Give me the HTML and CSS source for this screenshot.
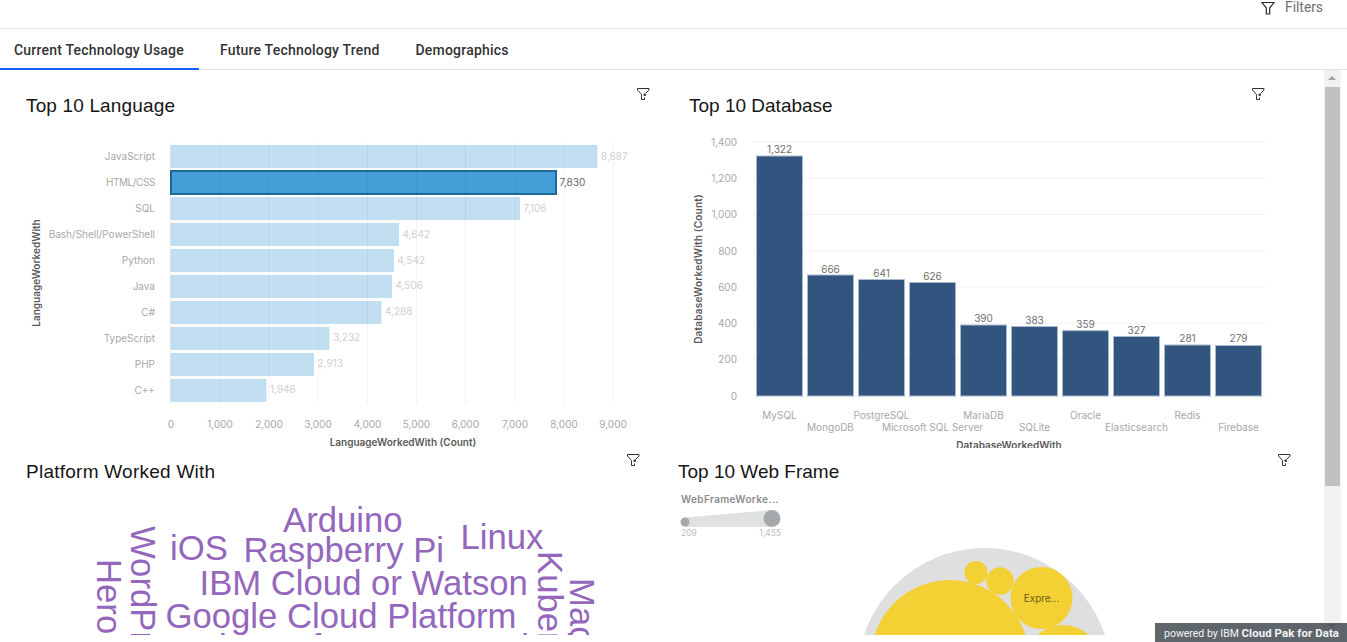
FILE: index.html
```html
<!DOCTYPE html>
<html>
<head>
    <title>Technology dashboard</title>
    <link rel="stylesheet" href="styles.css">
</head>
<body>

<div class="topbar">
    <svg class="funnel" width="14" height="14" viewBox="0 0 14 14"><path d="M1 1.5h12L8.7 7v6H5.3V7z"/></svg>
    <span class="filters">Filters</span>
</div>

<div class="tabs">
    <a class="tab active">Current Technology Usage</a>
    <a class="tab">Future Technology Trend</a>
    <a class="tab">Demographics</a>
</div>

<div class="main">
    <div class="grid">

        <div class="panel p1">
            <h2>Top 10 Language</h2>
            <svg class="tile-filter" width="14" height="14" viewBox="0 0 14 14"><path d="M1.5 1.5H13V3L9.5 6.5M1.5 1.5V3L5.5 7.5V12.5H8.5V10.5"/><circle cx="8.7" cy="7.7" r="1.3"/></svg>
            <svg class="chart" width="660" height="320" viewBox="0 130 660 320">
                <g class="bars-light">
                    <rect x="170.5" y="145" width="427" height="23"/>
                    <rect x="170.5" y="197" width="349.5" height="23"/>
                    <rect x="170.5" y="223" width="228.5" height="23"/>
                    <rect x="170.5" y="249" width="223.5" height="23"/>
                    <rect x="170.5" y="275" width="221.5" height="23"/>
                    <rect x="170.5" y="301" width="211" height="23"/>
                    <rect x="170.5" y="327" width="159" height="23"/>
                    <rect x="170.5" y="353" width="143.5" height="23"/>
                    <rect x="170.5" y="379" width="96" height="23"/>
                </g>
                <rect class="bar-selected" x="171" y="171" width="385" height="23"/>
                <g class="vgrid">
                    <path d="M170.5 143V404M220 143V404M269 143V404M318 143V404M367.5 143V404M416.5 143V404M465.5 143V404M515 143V404M564 143V404M613 143V404"/>
                </g>
                <g class="tick end">
                    <text x="155" y="160">JavaScript</text>
                    <text x="155" y="186" class="narrow">HTML/CSS</text>
                    <text x="155" y="212">SQL</text>
                    <text x="155" y="238">Bash/Shell/PowerShell</text>
                    <text x="155" y="264">Python</text>
                    <text x="155" y="290">Java</text>
                    <text x="155" y="316">C#</text>
                    <text x="155" y="342">TypeScript</text>
                    <text x="155" y="368">PHP</text>
                    <text x="155" y="394">C++</text>
                </g>
                <g class="value">
                    <text x="601" y="160">8,687</text>
                    <text class="value-on" x="559.5" y="186">7,830</text>
                    <text x="523.5" y="212">7,106</text>
                    <text x="402.5" y="238">4,642</text>
                    <text x="397.5" y="264">4,542</text>
                    <text x="395.5" y="289">4,506</text>
                    <text x="385" y="315">4,288</text>
                    <text x="333" y="341">3,232</text>
                    <text x="317.5" y="367">2,913</text>
                    <text x="270" y="393">1,946</text>
                </g>
                <g class="tick middle">
                    <text x="171" y="428">0</text>
                    <text x="220" y="428">1,000</text>
                    <text x="269" y="428">2,000</text>
                    <text x="318" y="428">3,000</text>
                    <text x="367.5" y="428">4,000</text>
                    <text x="416.5" y="428">5,000</text>
                    <text x="465.5" y="428">6,000</text>
                    <text x="515" y="428">7,000</text>
                    <text x="564" y="428">8,000</text>
                    <text x="613" y="428">9,000</text>
                </g>
                <text class="axis-title" x="403" y="446">LanguageWorkedWith (Count)</text>
                <text class="axis-title" transform="translate(40 273) rotate(-90)">LanguageWorkedWith</text>
            </svg>
        </div>

        <div class="panel p2">
            <h2>Top 10 Database</h2>
            <svg class="tile-filter" width="14" height="14" viewBox="0 0 14 14"><path d="M1.5 1.5H13V3L9.5 6.5M1.5 1.5V3L5.5 7.5V12.5H8.5V10.5"/><circle cx="8.7" cy="7.7" r="1.3"/></svg>
            <svg class="chart" width="660" height="318" viewBox="662 130 660 318">
                <g class="hgrid">
                    <path d="M752 141.7H1265M752 178.3H1265M752 214.5H1265M752 250.7H1265M752 287H1265M752 323.3H1265M752 359.6H1265M752 396H1265"/>
                </g>
                <g class="bars-dark">
                    <rect x="756.5" y="156" width="46" height="240"/>
                    <rect x="807.5" y="275" width="46" height="121"/>
                    <rect x="858.5" y="279.5" width="46" height="116.5"/>
                    <rect x="909.5" y="282.5" width="46" height="113.5"/>
                    <rect x="960.5" y="325" width="46" height="71"/>
                    <rect x="1011.5" y="326.5" width="46" height="69.5"/>
                    <rect x="1062.5" y="330.7" width="46" height="65.3"/>
                    <rect x="1113.5" y="336.5" width="46" height="59.5"/>
                    <rect x="1164.5" y="345" width="46" height="51"/>
                    <rect x="1215.5" y="345.5" width="46" height="50.5"/>
                </g>
                <g class="tick end">
                    <text x="737" y="145.5">1,400</text>
                    <text x="737" y="182">1,200</text>
                    <text x="737" y="218">1,000</text>
                    <text x="737" y="254.5">800</text>
                    <text x="737" y="291">600</text>
                    <text x="737" y="327">400</text>
                    <text x="737" y="363">200</text>
                    <text x="737" y="399.5">0</text>
                </g>
                <g class="value-top">
                    <text x="779.5" y="153">1,322</text>
                    <text x="830.5" y="273">666</text>
                    <text x="881.5" y="277">641</text>
                    <text x="932.5" y="280">626</text>
                    <text x="983.5" y="322">390</text>
                    <text x="1034.5" y="324">383</text>
                    <text x="1085.5" y="328">359</text>
                    <text x="1136.5" y="334">327</text>
                    <text x="1187.5" y="342">281</text>
                    <text x="1238.5" y="342">279</text>
                </g>
                <g class="tick middle">
                    <text x="779.5" y="419">MySQL</text>
                    <text x="830.5" y="431">MongoDB</text>
                    <text x="881.5" y="419">PostgreSQL</text>
                    <text x="932.5" y="431">Microsoft SQL Server</text>
                    <text x="983.5" y="419">MariaDB</text>
                    <text x="1034.5" y="431">SQLite</text>
                    <text x="1085.5" y="419">Oracle</text>
                    <text x="1136.5" y="431">Elasticsearch</text>
                    <text x="1187.5" y="419">Redis</text>
                    <text x="1238.5" y="431">Firebase</text>
                </g>
                <text class="axis-title" x="1009" y="449">DatabaseWorkedWith</text>
                <text class="axis-title wide" transform="translate(702 269) rotate(-90)">DatabaseWorkedWith (Count)</text>
            </svg>
        </div>

        <div class="panel p3">
            <h2>Platform Worked With</h2>
            <svg class="tile-filter" width="14" height="14" viewBox="0 0 14 14"><path d="M1.5 1.5H13V3L9.5 6.5M1.5 1.5V3L5.5 7.5V12.5H8.5V10.5"/><circle cx="8.7" cy="7.7" r="1.3"/></svg>
            <svg class="chart cloud" width="660" height="135" viewBox="0 500 660 135">
                <text x="283" y="532">Arduino</text>
                <text x="243.5" y="562">Raspberry Pi</text>
                <text x="460.5" y="548.5">Linux</text>
                <text x="170" y="560">iOS</text>
                <text x="199.5" y="595">IBM Cloud or Watson</text>
                <text x="165.5" y="628">Google Cloud Platform</text>
                <text x="190" y="659">Microsoft Azure</text>
                <text x="498" y="659">Slack</text>
                <text transform="translate(97 559) rotate(90)">Heroku</text>
                <text transform="translate(130.5 526) rotate(90)">WordPress</text>
                <text transform="translate(538 551) rotate(90)">Kubernetes</text>
                <text transform="translate(570 578) rotate(90)">MacOS</text>
            </svg>
        </div>

        <div class="panel p4">
            <h2>Top 10 Web Frame</h2>
            <svg class="tile-filter" width="14" height="14" viewBox="0 0 14 14"><path d="M1.5 1.5H13V3L9.5 6.5M1.5 1.5V3L5.5 7.5V12.5H8.5V10.5"/><circle cx="8.7" cy="7.7" r="1.3"/></svg>
            <svg class="chart" width="660" height="150" viewBox="662 485 660 150">
                <text class="legend-title" x="681" y="503">WebFrameWorke...</text>
                <path class="legend-wedge" d="M685 517.5L772 510V527H685z"/>
                <circle class="legend-dot" cx="685" cy="522" r="4.5"/>
                <circle class="legend-dot" cx="772" cy="518.5" r="8.5"/>
                <text class="legend-num" x="681" y="536">209</text>
                <text class="legend-num end" x="781" y="536">1,455</text>
                <circle class="pack-outer" cx="984.5" cy="675" r="127"/>
                <circle class="pack" cx="950" cy="659" r="79"/>
                <circle class="pack" cx="1041.5" cy="598" r="31"/>
                <circle class="pack" cx="976" cy="572.5" r="11.5"/>
                <circle class="pack" cx="1000" cy="581" r="13.7"/>
                <circle class="pack" cx="1063" cy="662" r="37"/>
                <text class="pack-label" x="1041.5" y="602">Expre...</text>
            </svg>
        </div>

    </div>
    <div class="scrollbar">
        <div class="arrow up"></div>
        <div class="thumb"></div>
        <div class="arrow down"></div>
    </div>
</div>

<div class="powered">powered by IBM <b>Cloud Pak for Data</b></div>

</body>
</html>
```

FILE: styles.css
```css
html, body {
    margin: 0;
    height: 642px;
    overflow: hidden;
    background: #fff;
    font-family: "Roboto", "Liberation Sans", sans-serif;
}

.topbar {
    height: 28px;
    border-bottom: 1px solid #e6e6e6;
    display: flex;
    justify-content: flex-end;
    align-items: flex-start;
    gap: 10px;
    padding-right: 24px;
}
.funnel {
    margin-top: 1px;
    fill: none;
    stroke: #262626;
    stroke-width: 1.2;
}
.filters {
    font-size: 13.8px;
    line-height: 15px;
    color: #6f6f6f;
}

.tabs {
    height: 40px;
    display: flex;
    border-bottom: 1px solid #e0e0e0;
}
.tab {
    padding: 0 15px;
    margin-right: 6px;
    height: 40px;
    line-height: 42px;
    font-size: 14px;
    font-weight: 500;
    color: #333;
    letter-spacing: 0.2px;
    white-space: nowrap;
}
.tab.active {
    padding-left: 14px;
    border-bottom: 2px solid #0f62fe;
    height: 39px;
}

.main {
    display: flex;
    height: 565px;
    overflow: hidden;
}
.grid {
    flex: 1;
    display: grid;
    grid-template-columns: 662px 662px;
    grid-template-rows: 380px 185px;
}
.panel {
    position: relative;
    overflow: hidden;
}
.panel h2 {
    margin: 0;
    font-family: "Liberation Sans", sans-serif;
    font-weight: 400;
    font-size: 19px;
    line-height: 22px;
    color: #161616;
    white-space: nowrap;
}
.chart {
    display: block;
}
.tile-filter {
    position: absolute;
    top: 17px;
    fill: none;
    stroke: #333;
}
.tile-filter circle {
    fill: #333;
    stroke: none;
}

.p1 h2 { padding: 25px 0 0 26px; letter-spacing: 0.15px; }
.p1 .chart { margin-top: 13px; }
.p1 .tile-filter { left: 636px; }

.p2 h2 { padding: 25px 0 0 27px; }
.p2 .chart { margin-top: 13px; }
.p2 .tile-filter { left: 589px; }

.p3 h2 { padding: 11px 0 0 26px; letter-spacing: 0.25px; }
.p3 .chart { margin-top: 17px; }
.p3 .tile-filter { left: 626px; top: 3px; }

.p4 h2 { padding: 11px 0 0 16px; }
.p4 .chart { margin-top: 2px; }
.p4 .tile-filter { left: 615px; top: 3px; }

/* chart text */
.tick text, .value text, .value-top text, .legend-num {
    font-family: "Inter", sans-serif;
    font-size: 10px;
}
.tick text { fill: #a8a8a8; }
.tick.end text, .legend-num.end { text-anchor: end; }
.tick.middle text { text-anchor: middle; }
.tick .narrow { letter-spacing: -0.4px; }
.value text { fill: #d0d0d0; }
.value .value-on { fill: #666; }
.value-top text { fill: #6f6f6f; text-anchor: middle; }
.axis-title {
    font-family: "Inter", sans-serif;
    font-size: 10px;
    font-weight: 600;
    fill: #595959;
    text-anchor: middle;
}
.axis-title.wide { letter-spacing: 0.2px; }

.bars-light rect {
    fill: #459fd6;
    fill-opacity: 0.33;
}
.bar-selected {
    fill: #459fd6;
    stroke: #1d6a96;
    stroke-width: 2;
}
.vgrid path, .hgrid path {
    fill: none;
    stroke: #000;
    stroke-opacity: 0.05;
}
.bars-dark rect {
    fill: #325580;
    stroke: #a9bacd;
    stroke-width: 1;
}

.cloud text {
    font-family: "Liberation Sans", sans-serif;
    font-size: 34.7px;
    fill: #9467bd;
}

.legend-title {
    font-family: "Inter", sans-serif;
    font-size: 10px;
    font-weight: 600;
    letter-spacing: 0.35px;
    fill: #8c8c8c;
}
.legend-wedge { fill: #e0e2e2; }
.legend-dot { fill: #a6a9ac; }
.legend-num { fill: #bdbdbd; font-size: 8.5px; }
.tick text, .value text, .value-top text { font-size: 10px; }
.pack-outer { fill: #dfdfdf; }
.pack { fill: #f3d034; }
.pack-label {
    font-family: "Inter", sans-serif;
    font-size: 10px;
    fill: #6b5a17;
    text-anchor: middle;
}

/* scrollbar */
.scrollbar {
    width: 17px;
    margin-right: 6px;
    background: #f1f1f1;
    display: flex;
    flex-direction: column;
}
.thumb {
    height: 399px;
    margin: 0 1px;
    background: #c1c1c1;
}
.arrow {
    height: 17px;
    flex: none;
    position: relative;
}
.arrow.down { margin-top: auto; }
.arrow::after {
    content: "";
    position: absolute;
    left: 4px;
    border-left: 4px solid transparent;
    border-right: 4px solid transparent;
}
.arrow.up::after {
    top: 6px;
    border-bottom: 4px solid #a3a3a3;
}
.arrow.down::after {
    top: 6px;
    border-top: 4px solid #505050;
}

.powered {
    position: absolute;
    right: 0;
    bottom: 0;
    width: 183px;
    height: 19px;
    padding-left: 9px;
    background: rgba(82, 90, 97, 0.93);
    color: #f4f4f4;
    font-size: 10.5px;
    line-height: 20px;
    white-space: nowrap;
}
.powered b {
    font-size: 11.4px;
    font-weight: 700;
    letter-spacing: 0.1px;
}
```
